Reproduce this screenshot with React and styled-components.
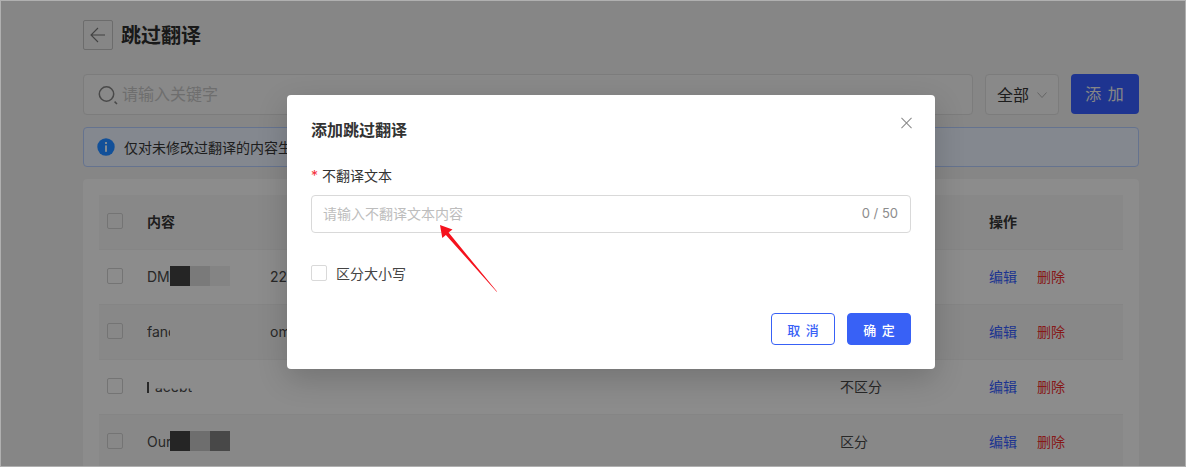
import React from "react";
import styled, { createGlobalStyle } from "styled-components";

const GlobalStyle = createGlobalStyle`
  html, body { margin: 0; padding: 0; }
  body {
    font-family: Inter, "Liberation Sans", "Noto Sans CJK SC", sans-serif;
    color: #303133;
  }
  * { box-sizing: border-box; }
`;

const rows = [
  { name: "DM", swatches: ["#3e3e3e", "#cbcbcb", "#dcdcdc"], extra: "22", mode: "" },
  { name: "fanc", swatches: [], extra: "om", mode: "" },
  { name: "acebt", swatches: [], extra: "", mode: "不区分", cut: true },
  { name: "Our", swatches: ["#3e3e3e", "#b7b7b7", "#787878"], extra: "", mode: "区分" },
];

function App() {
  return (
    <Screen>
      <GlobalStyle />
      <Page>
        <TitleRow>
          <BackButton>
            <svg width="16" height="16" viewBox="0 0 16 16" fill="none" stroke="#6f6f6f" strokeWidth="1.1">
              <path d="M15 8H1M8 1L1 8l7 7" />
            </svg>
          </BackButton>
          <Title>跳过翻译</Title>
        </TitleRow>
        <Toolbar>
          <SearchBox>
            <svg width="20" height="20" viewBox="0 0 20 20" fill="none" stroke="#7a7a7a" strokeWidth="1.5">
              <circle cx="8.5" cy="9" r="7.2" />
              <path d="M16.6 16.6L19 19" />
            </svg>
            <SearchHint>请输入关键字</SearchHint>
          </SearchBox>
          <Select>
            <SelectText>全部</SelectText>
            <svg width="10" height="6" viewBox="0 0 10 6" fill="none" stroke="#a8a8a8" strokeWidth="1">
              <path d="M.5.5L5 5.5 9.5.5" />
            </svg>
          </Select>
          <AddButton>添 加</AddButton>
        </Toolbar>
        <Notice>
          <svg width="18" height="18" viewBox="0 0 18 18">
            <circle cx="9" cy="9" r="8.7" fill="#1f86ff" />
            <rect x="8" y="4" width="2" height="2" fill="#d8e6f5" />
            <rect x="8" y="7.4" width="2" height="6.4" fill="#d8e6f5" />
          </svg>
          <span>仅对未修改过翻译的内容生效</span>
        </Notice>
        <Panel>
          <HeadRow>
            <Check />
            <span>内容</span>
            <span />
            <span />
            <span>操作</span>
          </HeadRow>
          {rows.map((row, i) => (
            <Row key={i} $even={i % 2 === 1}>
              <Check />
              {row.cut ? (
                <NameCell>
                  <CutStem />
                  <CutText>{row.name}</CutText>
                </NameCell>
              ) : (
                <NameCell>
                  <NameText>{row.name}</NameText>
                  {row.swatches.map((c) => (
                    <Swatch key={c} $color={c} />
                  ))}
                </NameCell>
              )}
              <span>{row.extra}</span>
              <span>{row.mode}</span>
              <Actions>
                <EditLink>编辑</EditLink>
                <DeleteLink>删除</DeleteLink>
              </Actions>
            </Row>
          ))}
        </Panel>
      </Page>
      <Overlay />
      <Modal>
        <ModalTitle>添加跳过翻译</ModalTitle>
        <CloseIcon viewBox="0 0 12 12" fill="none" stroke="#8a8a8a" strokeWidth="1.1">
          <path d="M.5.5l11 11M11.5.5l-11 11" />
        </CloseIcon>
        <FieldLabel>
          <Star>*</Star>不翻译文本
        </FieldLabel>
        <TextBox>
          <span>请输入不翻译文本内容</span>
          <Counter>0 / 50</Counter>
        </TextBox>
        <CaseRow>
          <ModalCheck />
          <span>区分大小写</span>
        </CaseRow>
        <Footer>
          <CancelButton>取 消</CancelButton>
          <OkButton>确 定</OkButton>
        </Footer>
        <Arrow width="70" height="70" viewBox="0 0 70 70">
          <path d="M0 0L12.5 4.5 8.6 7.6 57 66.5 56.6 66.8 5.9 9.9 2.3 13Z" fill="#f5121d" />
        </Arrow>
      </Modal>
    </Screen>
  );
}

export default App;

const Screen = styled.div`
  position: relative;
  width: 1186px;
  height: 467px;
  overflow: hidden;
  background: #dfdfdf;
`;
const Page = styled.div`
  padding: 20px 47px 0 83px;
`;
const TitleRow = styled.div`
  display: flex;
  align-items: center;
  gap: 8px;
  height: 30px;
`;
const BackButton = styled.div`
  width: 30px;
  height: 30px;
  border: 1px solid #b4b4b4;
  border-radius: 2px;
  display: flex;
  align-items: center;
  justify-content: center;
`;
const Title = styled.div`
  font-size: 20px;
  font-weight: 700;
  color: #2a2a2a;
  padding-bottom: 2px;
`;
const Toolbar = styled.div`
  display: flex;
  gap: 12px;
  margin-top: 24px;
  height: 41px;
`;
const SearchBox = styled.div`
  flex: 1;
  display: flex;
  align-items: center;
  gap: 4px;
  padding-left: 14px;
  border: 1px solid #cfcfcf;
  border-radius: 4px;
  background: #e4e4e4;
`;
const SearchHint = styled.span`
  font-size: 16px;
  color: #b8b8b8;
  padding-bottom: 3px;
`;
const Select = styled.div`
  width: 74px;
  display: flex;
  align-items: center;
  gap: 8px;
  padding-left: 11px;
  border: 1px solid #cfcfcf;
  border-radius: 4px;
  background: #e4e4e4;
`;
const SelectText = styled.span`
  font-size: 16px;
  color: #303030;
  padding-bottom: 2px;
`;
const AddButton = styled.div`
  width: 68px;
  height: 40px;
  padding-bottom: 2px;
  display: flex;
  align-items: center;
  justify-content: center;
  border-radius: 4px;
  background: #3358f0;
  color: #e0e0e0;
  font-size: 16px;
  letter-spacing: 1px;
`;
const Notice = styled.div`
  height: 40px;
  margin-top: 12px;
  display: flex;
  align-items: center;
  gap: 9px;
  padding: 0 0 1px 13px;
  border: 1px solid #a9c0ee;
  border-radius: 4px;
  background: #dde3ee;
  font-size: 14px;
  color: #333;
`;
const Panel = styled.div`
  margin-top: 12px;
  padding: 16px 16px 0;
  background: #e9e9e9;
  border-radius: 4px;
`;
const columns = `
  display: grid;
  grid-template-columns: 40px 123px 570px 149px 1fr;
  align-items: center;
  padding-left: 8px;
  padding-bottom: 2px;
  font-size: 14px;
`;
const HeadRow = styled.div`
  ${columns}
  height: 54px;
  background: #e3e3e3;
  font-weight: 700;
  color: #333;
`;
const Row = styled.div`
  ${columns}
  height: 55px;
  background: ${(p) => (p.$even ? "#e3e3e3" : "#e9e9e9")};
  border-top: 1px solid #dedede;
  color: #444;
`;
const Check = styled.div`
  width: 16px;
  height: 16px;
  border: 1px solid #c2c2c2;
  border-radius: 2px;
`;
const NameCell = styled.div`
  display: flex;
  align-items: center;
  height: 20px;
`;
const NameText = styled.span`
  width: 23px;
  overflow: hidden;
  white-space: nowrap;
`;
const CutStem = styled.i`
  width: 2px;
  height: 11px;
  margin: 3px 6px 0 0;
  background: #444;
`;
const CutText = styled.span`
  clip-path: inset(11px 0 0 0);
`;
const Swatch = styled.i`
  width: 20px;
  height: 20px;
  background: ${(p) => p.$color};
`;
const Actions = styled.div`
  display: flex;
  gap: 20px;
`;
const EditLink = styled.span`
  color: #3358f0;
`;
const DeleteLink = styled.span`
  color: #e02b2b;
`;
const Overlay = styled.div`
  position: absolute;
  inset: 0;
  background: rgba(0, 0, 0, 0.4);
  border: 1px solid #b0b0b0;
`;
const Modal = styled.div`
  position: absolute;
  left: 287px;
  top: 95px;
  width: 648px;
  height: 274px;
  padding: 24px;
  background: #fff;
  border-radius: 4px;
  box-shadow: 0 10px 30px rgba(0, 0, 0, 0.18);
`;
const ModalTitle = styled.div`
  font-size: 16px;
  font-weight: 700;
  line-height: 22px;
  color: #333;
`;
const CloseIcon = styled.svg`
  position: absolute;
  top: 22px;
  right: 23px;
  width: 11px;
  height: 12px;
`;
const FieldLabel = styled.div`
  margin-top: 25px;
  font-size: 14px;
  line-height: 20px;
  color: #333;
`;
const Star = styled.span`
  color: #f5323c;
  margin-right: 4px;
`;
const TextBox = styled.div`
  margin-top: 9px;
  height: 38px;
  display: flex;
  align-items: center;
  justify-content: space-between;
  padding: 0 12px 2px 11px;
  border: 1px solid #d9d9d9;
  border-radius: 4px;
  font-size: 14px;
  color: #bdbdbd;
`;
const Counter = styled.span`
  color: #8c8c8c;
  font-size: 13px;
`;
const CaseRow = styled.div`
  display: flex;
  align-items: center;
  gap: 9px;
  margin-top: 30px;
  font-size: 14px;
  color: #444;
`;
const ModalCheck = styled.div`
  width: 16px;
  height: 16px;
  border: 1px solid #d9d9d9;
  border-radius: 2px;
`;
const Footer = styled.div`
  position: absolute;
  right: 24px;
  bottom: 24px;
  display: flex;
  gap: 12px;
`;
const CancelButton = styled.div`
  width: 64px;
  height: 32px;
  display: flex;
  align-items: center;
  justify-content: center;
  padding-left: 1px;
  border: 1px solid #3861f6;
  border-radius: 4px;
  color: #3861f6;
  font-size: 13px;
  font-weight: 500;
  letter-spacing: 1px;
`;
const OkButton = styled(CancelButton)`
  background: #3861f6;
  color: #fff;
`;
const Arrow = styled.svg`
  position: absolute;
  left: 153px;
  top: 130px;
`;
